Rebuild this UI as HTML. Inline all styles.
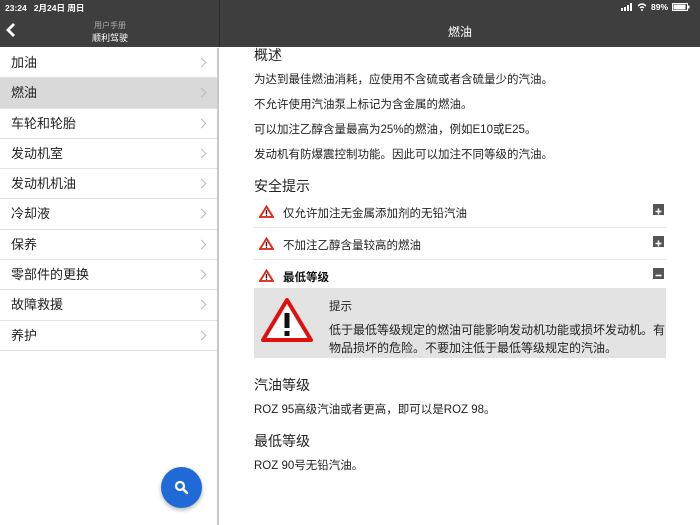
<!DOCTYPE html>
<html><head><meta charset="utf-8"><style>
*{margin:0;padding:0;box-sizing:border-box}
body{width:700px;height:525px;overflow:hidden;background:#fff;font-family:"Liberation Sans","Noto Sans CJK SC",sans-serif;position:relative;color:#222}
.hdr{position:absolute;left:0;top:0;width:700px;height:47px;background:#3e3e3e;color:#fff}
.sb{position:absolute;left:0;top:48px;width:219px;height:477px;border-right:2px solid #c8c8c8;background:#fff}
.row{height:30.3px;line-height:30px;padding-left:11px;font-size:13px;border-bottom:1px solid #e2e2e2;position:relative;color:#222}
.row.sel{background:#d9d9d9}
.row:after{content:"";position:absolute;right:12px;top:11px;width:6px;height:6px;border-right:1px solid #bbb;border-top:1px solid #bbb;transform:rotate(45deg)}
.t{position:absolute;left:254px;font-size:11.5px;white-space:nowrap}
.h{position:absolute;left:254px;font-size:14px;font-weight:normal;white-space:nowrap}
.acc{position:absolute;left:254px;width:412px;height:32px;border-bottom:1px solid #e6e6e6}
.acc span{position:absolute;left:29px;top:9px;font-size:11.5px}
.acc .tri{position:absolute;left:5px;top:9px}
.acc .pm{position:absolute;right:2px;top:8px;width:11px;height:11px;background:#555;color:#fff}
</style></head><body>
<div class="hdr">
<div style="position:absolute;left:5px;top:2px;font-size:8.5px;font-weight:bold">23:24&nbsp;&nbsp; 2月24日 周日</div>
<div style="position:absolute;right:10px;top:2px;font-size:8.5px;font-weight:bold;display:flex;align-items:center;gap:4px">
<svg width="12" height="8"><rect x="0" y="5" width="2" height="3" fill="#fff"/><rect x="3" y="4" width="2" height="4" fill="#fff"/><rect x="6" y="2" width="2" height="6" fill="#fff"/><rect x="9" y="0" width="2" height="8" fill="#fff"/></svg>
<svg width="10" height="8"><path d="M1 3Q5 -1 9 3M3 5Q5 3 7 5" stroke="#fff" fill="none" stroke-width="1.3"/><circle cx="5" cy="7" r="1" fill="#fff"/></svg>
<span>89%</span><svg width="18" height="8"><rect x="0.5" y="0.5" width="15" height="7" fill="none" stroke="#fff"/><rect x="1.5" y="1.5" width="12" height="5" fill="#fff"/><rect x="16" y="2.5" width="1.5" height="3" fill="#fff"/></svg></div>
<svg style="position:absolute;left:6px;top:22px" width="10" height="16"><path d="M8 2L2 8L8 14" stroke="#fff" stroke-width="2.8" fill="none"/></svg>
<div style="position:absolute;left:60px;width:100px;top:20px;text-align:center;font-size:8px;color:#aaa">用户手册</div>
<div style="position:absolute;left:60px;width:100px;top:31px;text-align:center;font-size:9px">顺利驾驶</div>
<div style="position:absolute;left:219px;top:0;width:1px;height:47px;background:#2c2c2c"></div>
<div style="position:absolute;left:220px;width:480px;top:23px;text-align:center;font-size:12px">燃油</div>
</div>
<div class="sb">
<div class="row">加油</div><div class="row sel">燃油</div><div class="row">车轮和轮胎</div><div class="row">发动机室</div><div class="row">发动机机油</div><div class="row">冷却液</div><div class="row">保养</div><div class="row">零部件的更换</div><div class="row">故障救援</div><div class="row">养护</div>
</div>
<div style="position:absolute;left:161px;top:467px;width:41px;height:41px;border-radius:50%;background:#1f6ad6;box-shadow:0 2px 4px rgba(0,0,0,.3)">
<svg style="position:absolute;left:13px;top:13px" width="15" height="15"><circle cx="6" cy="6" r="4" stroke="#fff" stroke-width="2.2" fill="none"/><path d="M9 9L13 13" stroke="#fff" stroke-width="2.6" stroke-linecap="round"/></svg></div>

<div class="h" style="top:45px">概述</div>
<div class="t" style="top:71px">为达到最佳燃油消耗，应使用不含硫或者含硫量少的汽油。</div>
<div class="t" style="top:96px">不允许使用汽油泵上标记为含金属的燃油。</div>
<div class="t" style="top:121px">可以加注乙醇含量最高为25%的燃油，例如E10或E25。</div>
<div class="t" style="top:146px">发动机有防爆震控制功能。因此可以加注不同等级的汽油。</div>
<div class="h" style="top:176px">安全提示</div>
<div class="acc" style="top:196px"><svg class="tri" width="15" height="13"><path d="M7.5 1.5L14 12H1Z" fill="#fff" stroke="#d21" stroke-width="1.8"/><rect x="6.8" y="5" width="1.4" height="4" fill="#222"/><rect x="6.8" y="9.6" width="1.4" height="1.3" fill="#222"/></svg><span>仅允许加注无金属添加剂的无铅汽油</span><div class="pm"><svg width="11" height="11"><path d="M2.5 5.5H8.5M5.5 2.5V8.5" stroke="#fff" stroke-width="1.6"/></svg></div></div>
<div class="acc" style="top:228px"><svg class="tri" width="15" height="13"><path d="M7.5 1.5L14 12H1Z" fill="#fff" stroke="#d21" stroke-width="1.8"/><rect x="6.8" y="5" width="1.4" height="4" fill="#222"/><rect x="6.8" y="9.6" width="1.4" height="1.3" fill="#222"/></svg><span>不加注乙醇含量较高的燃油</span><div class="pm"><svg width="11" height="11"><path d="M2.5 5.5H8.5M5.5 2.5V8.5" stroke="#fff" stroke-width="1.6"/></svg></div></div>
<div class="acc" style="top:260px;border:none;height:28px"><svg class="tri" width="15" height="13"><path d="M7.5 1.5L14 12H1Z" fill="#fff" stroke="#d21" stroke-width="1.8"/><rect x="6.8" y="5" width="1.4" height="4" fill="#222"/><rect x="6.8" y="9.6" width="1.4" height="1.3" fill="#222"/></svg><span style="font-weight:bold;color:#111">最低等级</span><div class="pm"><svg width="11" height="11"><path d="M2.5 5.5H8.5" stroke="#fff" stroke-width="1.6"/></svg></div></div>
<div style="position:absolute;left:254px;top:288px;width:412px;height:70px;background:#e3e3e3">
<svg style="position:absolute;left:6px;top:8px" width="54" height="48"><path d="M27 4L51 44H3Z" fill="#fff" stroke="#e01010" stroke-width="4" stroke-linejoin="round"/><rect x="24.5" y="17" width="5" height="15" fill="#111"/><rect x="24.5" y="35" width="5" height="5" fill="#111"/></svg>
<div style="position:absolute;left:75px;top:10px;font-size:11.5px">提示</div>
<div style="position:absolute;left:75px;top:33px;font-size:12px;line-height:18px;width:337px">低于最低等级规定的燃油可能影响发动机功能或损坏发动机。有物品损坏的危险。不要加注低于最低等级规定的汽油。</div>
</div>
<div class="h" style="top:375px">汽油等级</div>
<div class="t" style="top:401px">ROZ 95高级汽油或者更高，即可以是ROZ 98。</div>
<div class="h" style="top:431px">最低等级</div>
<div class="t" style="top:457px">ROZ 90号无铅汽油。</div>
</body></html>
